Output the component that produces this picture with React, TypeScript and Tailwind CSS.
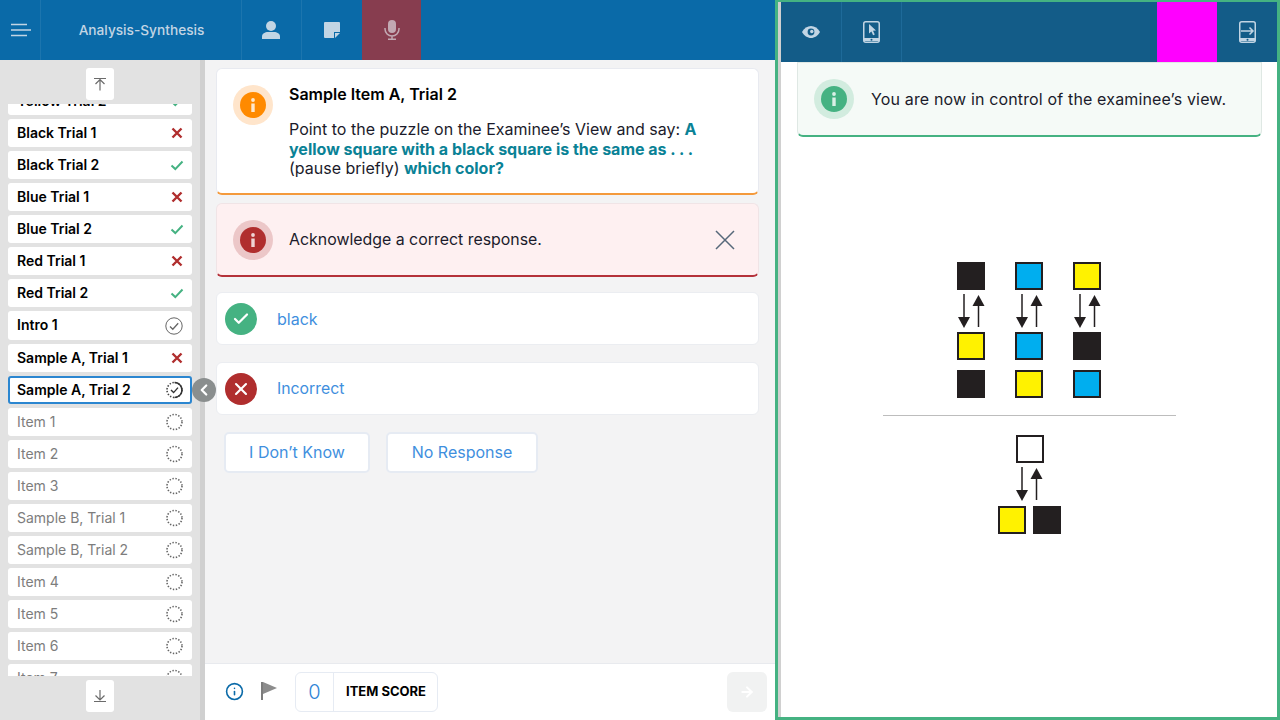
import { Check, X, ChevronLeft, Info, ArrowRight } from "lucide-react";

type Estado = "x" | "ok" | "intro" | "atual" | "vazio";

const itens: { nome: string; estado: Estado }[] = [
  { nome: "Yellow Trial 2", estado: "ok" },
  { nome: "Black Trial 1", estado: "x" },
  { nome: "Black Trial 2", estado: "ok" },
  { nome: "Blue Trial 1", estado: "x" },
  { nome: "Blue Trial 2", estado: "ok" },
  { nome: "Red Trial 1", estado: "x" },
  { nome: "Red Trial 2", estado: "ok" },
  { nome: "Intro 1", estado: "intro" },
  { nome: "Sample A, Trial 1", estado: "x" },
  { nome: "Sample A, Trial 2", estado: "atual" },
  { nome: "Item 1", estado: "vazio" },
  { nome: "Item 2", estado: "vazio" },
  { nome: "Item 3", estado: "vazio" },
  { nome: "Sample B, Trial 1", estado: "vazio" },
  { nome: "Sample B, Trial 2", estado: "vazio" },
  { nome: "Item 4", estado: "vazio" },
  { nome: "Item 5", estado: "vazio" },
  { nome: "Item 6", estado: "vazio" },
  { nome: "Item 7", estado: "vazio" },
];

function IconeEstado({ estado }: { estado: Estado }) {
  if (estado === "x") {
    return (
      <svg width="18" height="18" viewBox="0 0 18 18" className="-mr-[3px]">
        <path d="M4.500 4.500l9 9M13.500 4.500l-9 9" stroke="#b02e2e" strokeWidth="2.4" />
      </svg>
    );
  }
  if (estado === "ok") {
    return (
      <svg width="18" height="18" viewBox="0 0 18 18" className="-mr-[3px]">
        <path d="M3.5 9.5l3.8 3.6 7.2-7.6" fill="none" stroke="#45b282" strokeWidth="2" />
      </svg>
    );
  }
  if (estado === "intro") {
    return (
      <svg width="18" height="18" viewBox="0 0 18 18">
        <circle cx="9" cy="9" r="8.2" fill="none" stroke="#666" strokeWidth="1" />
        <path d="M5 9.5l2.8 2.8 5.4-6" fill="none" stroke="#666" strokeWidth="1.3" />
      </svg>
    );
  }
  if (estado === "atual") {
    return (
      <svg width="18" height="18" viewBox="0 0 18 18">
        <circle cx="9.500" cy="9" r="7.500" fill="none" stroke="#444" strokeWidth="1.600" strokeDasharray="1.400 1.600" />
        <path d="M9.500 1.500a7.500 7.500 0 0 1 0 15" fill="none" stroke="#333" strokeWidth="1.500" />
        <path d="M6 9l2.600 2.600 4.400-5" fill="none" stroke="#333" strokeWidth="1.400" />
      </svg>
    );
  }
  return (
    <svg width="18" height="18" viewBox="0 0 18 18">
      <circle cx="9.500" cy="9" r="7.500" fill="none" stroke="#666" strokeWidth="1.600" strokeDasharray="1.400 1.600" />
    </svg>
  );
}

function Quadrado({ x, y, cor }: { x: number; y: number; cor: string }) {
  return <rect x={x + 1} y={y + 1} width="26" height="26" fill={cor} stroke="#231f20" strokeWidth="2" />;
}

function Setas({ x, y }: { x: number; y: number }) {
  return (
    <g fill="#231f20" stroke="#231f20">
      <path d={`M${x} ${y}v24`} strokeWidth="1.5" />
      <path d={`M${x - 6} ${y + 23}h12l-6 11z`} stroke="none" />
      <path d={`M${x + 14.5} ${y + 33}v-24`} strokeWidth="1.5" />
      <path d={`M${x + 8.5} ${y + 12}h12l-6 -11z`} stroke="none" />
    </g>
  );
}

const PRETO = "#231f20";
const AZUL = "#00aeef";
const AMARELO = "#fff200";

function Puzzle() {
  return (
    <svg width="293" height="300" viewBox="0 0 293 300" className="block">
      <Quadrado x={74} y={0} cor={PRETO} />
      <Quadrado x={132} y={0} cor={AZUL} />
      <Quadrado x={190} y={0} cor={AMARELO} />
      <Setas x={81} y={32} />
      <Setas x={139} y={32} />
      <Setas x={197} y={32} />
      <Quadrado x={74} y={70} cor={AMARELO} />
      <Quadrado x={132} y={70} cor={AZUL} />
      <Quadrado x={190} y={70} cor={PRETO} />
      <Quadrado x={74} y={108} cor={PRETO} />
      <Quadrado x={132} y={108} cor={AMARELO} />
      <Quadrado x={190} y={108} cor={AZUL} />
      <path d="M0 153.5h293" stroke="#bdbdbd" strokeWidth="1" />
      <Quadrado x={133} y={173} cor="#ffffff" />
      <Setas x={139} y={205} />
      <Quadrado x={115} y={244} cor={AMARELO} />
      <Quadrado x={150} y={244} cor={PRETO} />
    </svg>
  );
}

export default function App() {
  return (
    <div className="flex h-[720px] w-[1280px] overflow-hidden bg-white font-['Inter',sans-serif] text-black">
      <div className="flex w-[775px] shrink-0 flex-col">
        {/* barra superior */}
        <header className="flex h-[60px] shrink-0 bg-[#0a6aa8] text-[#c2d5e4]">
          <div className="flex w-[41px] items-center justify-center border-r border-[#1c75ae] pl-[2px]">
            <svg width="22" height="14" viewBox="0 0 22 14">
              <path d="M1 1.5h16M1 7h20M1 12.5h16" stroke="#c2d5e4" strokeWidth="1.6" />
            </svg>
          </div>
          <div className="flex w-[201px] items-center justify-center border-r border-[#1c75ae] pl-[1px] text-[13.700px] font-medium">
            Analysis-Synthesis
          </div>
          <div className="flex w-[60px] items-center justify-center border-r border-[#1c75ae] pr-[1px]">
            <svg width="18" height="18" viewBox="0 0 18 18" fill="#c2d5e4">
              <circle cx="9" cy="5" r="5" />
              <path d="M0 18v-2.5C0 12.5 3 11 6 11h6c3 0 6 1.500 6 4.500V18z" />
            </svg>
          </div>
          <div className="flex w-[60px] items-center justify-center">
            <svg width="16" height="16" viewBox="0 0 16 16" fill="#c2d5e4">
              <path d="M0 1a1 1 0 0 1 1-1h14a1 1 0 0 1 1 1v9h-6v6H1a1 1 0 0 1-1-1z" />
              <path d="M11 11h5l-5 5z" />
            </svg>
          </div>
          <div className="flex w-[59px] items-center justify-center bg-[#873d4f]">
            <svg width="16" height="20" viewBox="0 0 16 20" fill="none">
              <rect x="4" y="0" width="8" height="13" rx="4" fill="#c2a9b3" />
              <path d="M1 8v1a7 7 0 0 0 14 0V8M8 16v3M4 19.200h8" stroke="#c2a9b3" strokeWidth="1.500" />
            </svg>
          </div>
        </header>

        <div className="flex min-h-0 flex-1">
          {/* lista de itens */}
          <aside className="relative z-10 flex w-[205px] shrink-0 flex-col border-r-[5px] border-[#d0d0d0] bg-[#e2e2e2]">
            <div className="flex h-[44px] shrink-0 justify-center pt-2">
              <button className="flex h-8 w-7 items-center justify-center rounded-[3px] bg-white">
                <svg width="14" height="14" viewBox="0 0 14 14" fill="none" stroke="#6b6b6b" strokeWidth="1.200">
                  <path d="M1 1.500h12M7 13.500V2M2.500 7L7 2.500 11.500 7" />
                </svg>
              </button>
            </div>
            <div className="h-[572px] shrink-0 overflow-hidden px-2">
              <ul className="-mt-[17px] flex flex-col gap-1">
                {itens.map((it) => (
                  <Linha key={it.nome} nome={it.nome} estado={it.estado} />
                ))}
              </ul>
            </div>
            <div className="flex justify-center pt-1">
              <button className="flex h-8 w-7 items-center justify-center rounded-[3px] bg-white">
                <svg width="14" height="14" viewBox="0 0 14 14" fill="none" stroke="#6b6b6b" strokeWidth="1.200">
                  <path d="M1 12.500h12M7 1v10M2.500 6.500L7 11l4.500-4.500" />
                </svg>
              </button>
            </div>
            <button className="absolute left-[192px] top-[318px] flex h-6 w-6 items-center justify-center rounded-full bg-[#8a8e8e] text-white">
              <ChevronLeft size={18} strokeWidth={3} />
            </button>
          </aside>

          {/* conteudo central */}
          <main className="flex min-w-0 flex-1 flex-col bg-[#f3f3f4]">
            <div className="flex min-h-0 flex-1 flex-col pl-[11px] pr-[16px] pt-2">
              <section className="flex h-[127px] shrink-0 rounded-[6px] border border-[#e8eaf0] border-b-2 border-b-[#f49a3c] bg-white pl-4 pt-4">
                <div className="flex h-10 w-10 shrink-0 items-center justify-center rounded-full bg-[#ffe5cb]">
                  <BolaInfo cor="#ff8a00" />
                </div>
                <div className="-mt-px pl-4">
                  <h2 className="text-[16px] leading-5 font-semibold">Sample Item A, Trial 2</h2>
                  <p className="mt-[16px] pr-[10px] text-[16px] leading-[19.700px] text-[#1b1b2b]">
                    Point to the puzzle on the Examinee’s View and say:{" "}
                    <b className="font-bold text-[#0a8296]">
                      A yellow square with a black square is the same as . . .
                    </b>{" "}
                    (pause briefly) <b className="font-bold text-[#0a8296]">which color?</b>
                  </p>
                </div>
              </section>

              <section className="mt-[8px] flex h-[74px] shrink-0 items-center rounded-[6px] border border-[#f0e4e6] border-b-2 border-b-[#b5323a] bg-[#fef0f1] pl-4">
                <div className="flex h-10 w-10 shrink-0 items-center justify-center rounded-full bg-[#ecc7c8]">
                  <BolaInfo cor="#b02e2e" />
                </div>
                <p className="pl-4 text-[15.900px] text-[#1b1b2b]">Acknowledge a correct response.</p>
                <svg width="20" height="20" viewBox="0 0 20 20" className="ml-auto mr-[23px]">
                  <path d="M1 1l18 18M19 1L1 19" stroke="#56687a" strokeWidth="1.500" />
                </svg>
              </section>

              <div className="mt-[15px] flex h-[53px] shrink-0 items-center rounded-[6px] border border-[#ebedf1] bg-white pl-2">
                <div className="flex h-8 w-8 items-center justify-center rounded-full bg-[#45b282] text-white">
                  <Check size={18} strokeWidth={3} />
                </div>
                <span className="pl-[20px] text-[16px] text-[#3f8fde]">black</span>
              </div>

              <div className="mt-[17px] flex h-[53px] shrink-0 items-center rounded-[6px] border border-[#ebedf1] bg-white pl-2">
                <div className="flex h-8 w-8 items-center justify-center rounded-full bg-[#b02e2e] text-white">
                  <X size={20} strokeWidth={2.500} />
                </div>
                <span className="pl-[20px] text-[15.800px] text-[#3f8fde]">Incorrect</span>
              </div>

              <div className="mt-[17px] flex gap-[16px] pl-2">
                <button className="h-[41px] w-[146px] rounded-[5px] border-2 border-[#e6ebf3] bg-white pb-[2px] text-[16px] text-[#3f8fde]">
                  I Don’t Know
                </button>
                <button className="h-[41px] w-[152px] rounded-[5px] border-2 border-[#e6ebf3] bg-white pb-[2px] text-[16px] text-[#3f8fde]">
                  No Response
                </button>
              </div>
            </div>

            {/* rodape */}
            <footer className="flex h-[57px] shrink-0 items-center border-t border-[#e8eaee] bg-white pl-5 pr-2">
              <Info size={19} strokeWidth={2} className="-mt-[2px] text-[#0a6aa8]" />
              <svg width="18" height="20" viewBox="0 0 18 20" className="-mt-[2px] ml-[17px]">
                <path d="M1 1v18" stroke="#7c7c7c" strokeWidth="2" />
                <path d="M2 1l14 6-14 6z" fill="#8c8c8c" />
              </svg>
              <div className="ml-[16px] flex h-10 w-[143px] rounded-[6px] border border-[#e6ebf3]">
                <span className="flex w-[38px] items-center justify-center border-r border-[#e6ebf3] text-[20px] font-light text-[#2f84d6]">
                  0
                </span>
                <span className="flex flex-1 items-center justify-center pl-[1px] text-[13px] font-bold">ITEM SCORE</span>
              </div>
              <button className="ml-auto flex h-10 w-10 items-center justify-center rounded-[6px] bg-[#f1f2f2] text-white">
                <ArrowRight size={16} strokeWidth={3} />
              </button>
            </footer>
          </main>
        </div>
      </div>

      {/* vista do examinando */}
      <div className="flex min-w-0 flex-1 flex-col border-[3px] border-t-2 border-[#45b282] border-l-[3px] bg-white">
        <div className="flex flex-1 flex-col border-l-[3px] border-[#d0d0d0]">
          <header className="flex h-[60px] shrink-0 bg-[#135c88]">
            <div className="flex w-[61px] items-center justify-center border-r border-[#1e6a99]">
              <svg width="18" height="12" viewBox="0 0 18 12">
                <path d="M0 6c2-3.800 5.500-6 9-6s7 2.200 9 6c-2 3.800-5.500 6-9 6s-7-2.200-9-6z" fill="#c2d5e4" />
                <circle cx="9" cy="6" r="3.400" fill="#135c88" />
                <circle cx="9.800" cy="5.500" r="1.700" fill="#c2d5e4" />
              </svg>
            </div>
            <div className="flex w-[60px] items-center justify-center border-r border-[#1e6a99] pr-[1px]">
              <svg width="17" height="22" viewBox="0 0 17 22" fill="none">
                <rect x="0.750" y="0.750" width="15.500" height="20.500" rx="2" stroke="#c2d5e4" strokeWidth="1.500" />
                <path d="M1 17h15v3H1z" fill="#c2d5e4" />
                <circle cx="8.500" cy="18.700" r="1" fill="#135c88" />
                <path d="M6 3l7 6.500-3 .300 1.800 3.700-1.700.800-1.700-3.800L6 12.500z" fill="#c2d5e4" />
              </svg>
            </div>
            <div className="ml-auto w-[60px] bg-[#ff00ff]" />
            <div className="flex w-[60px] items-center justify-center">
              <svg width="17" height="22" viewBox="0 0 17 22" fill="none">
                <rect x="0.750" y="0.750" width="15.500" height="20.500" rx="2" stroke="#c2d5e4" strokeWidth="1.500" />
                <path d="M1 17h15v3H1z" fill="#c2d5e4" />
                <circle cx="8.500" cy="18.700" r="1" fill="#135c88" />
                <path d="M2 10h12M10.500 6.500L14 10l-3.500 3.500" stroke="#c2d5e4" strokeWidth="1.500" />
              </svg>
            </div>
          </header>

          <div className="ml-[16px] mr-[15px] flex h-[75px] shrink-0 items-center rounded-b-[6px] border border-[#dfe8e4] border-b-2 border-b-[#45b282] bg-[#f5faf7] pl-4">
            <div className="flex h-10 w-10 shrink-0 items-center justify-center rounded-full bg-[#d2ecdf]">
              <BolaInfo cor="#45b282" />
            </div>
            <p className="pl-[17px] text-[16px] tracking-[0.15px] text-[#1b1b2b]">
              You are now in control of the examinee’s view.
            </p>
          </div>

          <div className="ml-[102px] mt-[125px]">
            <Puzzle />
          </div>
        </div>
      </div>
    </div>
  );
}

function BolaInfo({ cor }: { cor: string }) {
  return (
    <svg width="26" height="26" viewBox="0 0 26 26">
      <circle cx="13" cy="13" r="13" fill={cor} />
      <circle cx="13" cy="8" r="1.900" fill="#ffffff" fillOpacity="0.8" />
      <rect x="11.300" y="11.500" width="3.400" height="8.500" fill="#ffffff" fillOpacity="0.8" />
    </svg>
  );
}

function Linha({ nome, estado }: { nome: string; estado: Estado }) {
  const atual = estado === "atual";
  const vazio = estado === "vazio";
  // Intro 1 e um pouco mais alto na referencia
  const alto = nome === "Intro 1";
  return (
    <li
      className={`flex shrink-0 items-center justify-between rounded-[3px] bg-white text-[14px] ${
        alto ? "h-[29px]" : "h-[28px]"
      } ${atual ? "border-2 border-[#2b86d0] px-[7px]" : "px-[9px]"} ${
        vazio ? "font-normal text-[#7d7d7d]" : "font-semibold text-black"
      }`}
    >
      <span className="-translate-y-px">{nome}</span>
      <IconeEstado estado={estado} />
    </li>
  );
}
